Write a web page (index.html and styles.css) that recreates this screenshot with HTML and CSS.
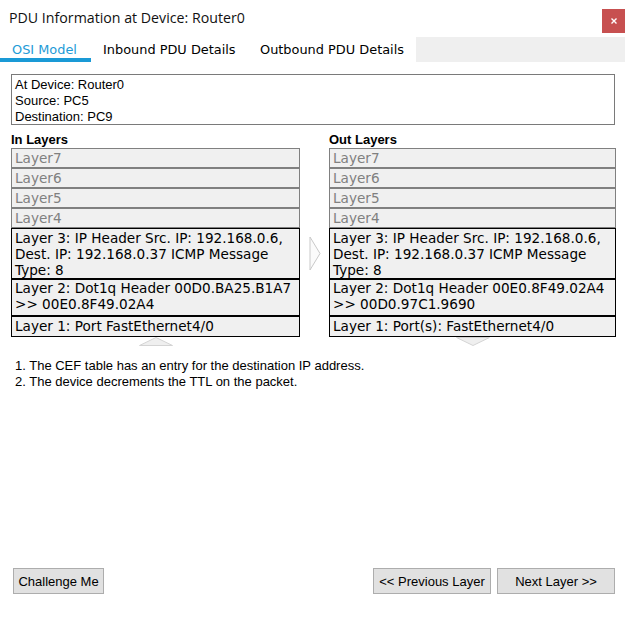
FILE: index.html
```html
<!DOCTYPE html>
<html>
<head>
<meta charset="utf-8">
<title>PDU Information at Device: Router0</title>
<link rel="stylesheet" href="styles.css">
</head>
<body>
<div class="window">
  <div class="titlebar">
    <div class="title">PDU Information at Device: Router0</div>
    <div class="close">
      <svg width="8" height="8" viewBox="0 0 8 8"><path d="M1.5 1.5 L6.5 6.5 M6.5 1.5 L1.5 6.5" stroke="#fff" stroke-width="1.4" fill="none"/></svg>
    </div>
  </div>
  <div class="tabs">
    <div class="tab tab-osi active">OSI Model</div>
    <div class="tab tab-in">Inbound PDU Details</div>
    <div class="tab tab-out">Outbound PDU Details</div>
    <div class="tab-fill"></div>
  </div>
  <div class="content">
    <div class="info">
      <div>At Device: Router0</div>
      <div>Source: PC5</div>
      <div>Destination: PC9</div>
    </div>
    <div class="layers">
      <div class="heading col-in">In Layers</div>
      <div class="heading col-out">Out Layers</div>

      <div class="layer dim col-in">Layer7</div>
      <div class="layer dim col-out">Layer7</div>
      <div class="layer dim col-in">Layer6</div>
      <div class="layer dim col-out">Layer6</div>
      <div class="layer dim col-in">Layer5</div>
      <div class="layer dim col-out">Layer5</div>
      <div class="layer dim col-in">Layer4</div>
      <div class="layer dim col-out">Layer4</div>

      <div class="layer active l3 col-in">Layer 3: IP Header Src. IP: 192.168.0.6,<br>Dest. IP: 192.168.0.37 ICMP Message<br>Type: 8</div>
      <div class="mid-arrow">
        <svg width="12" height="35" viewBox="0 0 12 35"><path d="M1 1 L11 17.5 L1 34 Z" fill="#fbfbfb" stroke="#c9c9c9" stroke-width="1"/></svg>
      </div>
      <div class="layer active l3 col-out">Layer 3: IP Header Src. IP: 192.168.0.6,<br>Dest. IP: 192.168.0.37 ICMP Message<br>Type: 8</div>

      <div class="layer active l2 col-in">Layer 2: Dot1q Header 00D0.BA25.B1A7<br>&gt;&gt; 00E0.8F49.02A4</div>
      <div class="layer active l2 col-out">Layer 2: Dot1q Header 00E0.8F49.02A4<br>&gt;&gt; 00D0.97C1.9690</div>

      <div class="layer active l1 col-in">Layer 1: Port FastEthernet4/0</div>
      <div class="layer active l1 col-out">Layer 1: Port(s): FastEthernet4/0</div>

      <div class="vert-arrow col-in">
        <svg width="34" height="9" viewBox="0 0 34 9"><path d="M0.5 8.5 L17 0.5 L33.5 8.5 Z" fill="#efefef" stroke="#d4d4d4" stroke-width="1"/></svg>
      </div>
      <div class="vert-arrow col-out">
        <svg width="34" height="9" viewBox="0 0 34 9"><path d="M0.5 0.5 L33.5 0.5 L17 8.5 Z" fill="#efefef" stroke="#d4d4d4" stroke-width="1"/></svg>
      </div>
    </div>
    <div class="steps">
      <div>1. The CEF table has an entry for the destination IP address.</div>
      <div>2. The device decrements the TTL on the packet.</div>
    </div>
  </div>
  <div class="buttons">
    <button class="btn btn-challenge">Challenge Me</button>
    <div class="nav">
      <button class="btn btn-nav">&lt;&lt; Previous Layer</button>
      <button class="btn btn-nav">Next Layer &gt;&gt;</button>
    </div>
  </div>
</div>
</body>
</html>
```
FILE: styles.css
```css
html, body {
  margin: 0;
  padding: 0;
  background: #fff;
}
.window {
  width: 625px;
  height: 621px;
  display: flex;
  flex-direction: column;
  color: #000;
  font-family: "Liberation Sans", Arial, sans-serif;
  font-size: 13px;
}
.titlebar {
  height: 37px;
  display: flex;
  justify-content: space-between;
  align-items: flex-start;
}
.title {
  font-family: "Open Sans", "Noto Sans", sans-serif;
  font-size: 14.2px;
  line-height: 20px;
  padding: 8px 0 0 9px;
  color: #111;
}
.close {
  width: 23px;
  height: 24px;
  margin-top: 9px;
  background: #c75050;
  display: flex;
  align-items: center;
  justify-content: center;
}
.tabs {
  height: 25px;
  display: flex;
  font-family: "DejaVu Sans", Verdana, sans-serif;
  font-size: 12.9px;
}
.tab {
  box-sizing: border-box;
  padding: 4px 0 0 12px;
  line-height: 17px;
  white-space: nowrap;
  color: #000;
}
.tab-osi { width: 91px; }
.tab-in { width: 156px; }
.tab-out { width: 169px; padding-left: 13px; }
.tab.active {
  color: #1e9bd7;
  border-bottom: 4px solid #1a9ad6;
}
.tab-fill {
  flex: 1;
  background: #efefef;
}
.content {
  padding: 12px 10px 0 11px;
}
.info {
  border: 1px solid #7a7a7a;
  padding: 2px 3px 1px;
  line-height: 16px;
  height: 46px;
  font-size: 13px;
}
.layers {
  display: grid;
  grid-template-columns: 289px 29px 287px;
  margin-top: 6px;
}
.col-in { grid-column: 1; }
.col-out { grid-column: 3; }
.heading {
  font-weight: bold;
  font-size: 13px;
  line-height: 17px;
}
.layer {
  background: #f0f0f0;
  border: 1px solid #808080;
  padding: 1px 3px 1px;
  line-height: 16px;
  font-family: "DejaVu Sans", Verdana, sans-serif;
  font-size: 13.6px;
  white-space: nowrap;
  overflow: hidden;
}
.layer.dim {
  color: #808080;
}
.layer.active {
  border-color: #000;
  color: #000;
}
.layer.l3 { padding-bottom: 0; }
.layer.l2 { padding-top: 0; padding-bottom: 3px; }
.layer.l1 { padding-bottom: 2px; }
.mid-arrow {
  grid-column: 2;
  align-self: center;
  justify-self: center;
  display: flex;
}
.vert-arrow {
  justify-self: center;
  display: flex;
  height: 10px;
}
.steps {
  margin-top: 11px;
  padding-left: 4px;
  font-size: 13px;
  line-height: 16px;
}
.buttons {
  margin-top: auto;
  display: flex;
  justify-content: space-between;
  padding: 0 10px 27px 13px;
}
.nav {
  display: flex;
  gap: 6px;
}
.btn {
  box-sizing: border-box;
  height: 26px;
  background: #e1e1e1;
  border: 1px solid #adadad;
  font-family: "Liberation Sans", Arial, sans-serif;
  font-size: 13px;
  color: #000;
  padding: 0;
  margin: 0;
}
.btn-challenge { width: 91px; }
.btn-nav { width: 118px; }
```
